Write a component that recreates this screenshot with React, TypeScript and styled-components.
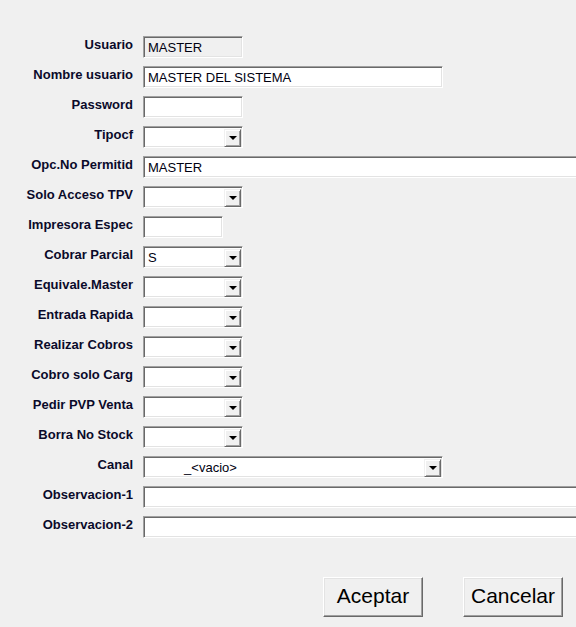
import React from "react";
import styled, { createGlobalStyle } from "styled-components";

const Global = createGlobalStyle`
  html, body { margin: 0; padding: 0; background: #f0f0f0; }
  body { width: 576px; height: 627px; overflow: hidden; font-family: "Liberation Sans", Arial, sans-serif; }
`;

const Page = styled.div`
  width: 576px;
  height: 627px;
  overflow: hidden;
  background: #f0f0f0;
  display: flex;
  flex-direction: column;
`;

const Form = styled.div`
  display: grid;
  grid-template-columns: 133px 1fr;
  column-gap: 10px;
  row-gap: 8px;
  padding-top: 36px;
`;

const Label = styled.div`
  font-weight: bold;
  font-size: 13px;
  color: #0a0a2a;
  text-align: right;
  line-height: 15px;
  padding-top: 1px;
  white-space: nowrap;
`;

const Cell = styled.div`
  height: 22px;
  display: flex;
  min-width: 0;
`;

const Field = styled.div<{ $w: number; $grey?: boolean }>`
  box-sizing: border-box;
  flex: none;
  width: ${(p) => p.$w}px;
  height: 22px;
  border: 1px solid;
  border-color: #a0a0a0 #ffffff #ffffff #a0a0a0;
  box-shadow: inset 1px 1px #696969, inset -1px -1px #e3e3e3;
  background: ${(p) => (p.$grey ? "#f0f0f0" : "#ffffff")};
  display: flex;
  align-items: center;
  font-size: 13px;
  color: #000010;
  padding: 1px 2px 0 4px;
  white-space: pre;
  overflow: hidden;
`;

const ComboText = styled.div`
  flex: 1;
  font-size: 13px;
  white-space: pre;
  overflow: hidden;
`;

const ArrowButton = styled.div`
  box-sizing: border-box;
  flex: none;
  width: 17px;
  height: 18px;
  margin-right: -1px;
  background: #f0f0f0;
  border: 1px solid;
  border-color: #f0f0f0 #696969 #696969 #f0f0f0;
  box-shadow: inset 1px 1px #ffffff, inset -1px -1px #a0a0a0;
  display: flex;
  align-items: center;
  justify-content: center;
`;

const Arrow = styled.div`
  width: 0;
  height: 0;
  border-left: 4px solid transparent;
  border-right: 4px solid transparent;
  border-top: 4px solid #000;
  margin-top: 1px;
`;

const Buttons = styled.div`
  display: flex;
  justify-content: flex-end;
  gap: 40px;
  padding-right: 13px;
  margin-top: 39px;
`;

const Button = styled.button`
  box-sizing: border-box;
  width: 100px;
  height: 40px;
  background: #f0f0f0;
  font-family: "Liberation Sans", Arial, sans-serif;
  font-size: 21px;
  color: #000;
  border: 1px solid;
  border-color: #ffffff #696969 #696969 #ffffff;
  box-shadow: inset -1px -1px #a0a0a0, inset 1px 1px #e3e3e3;
  padding: 0 0 2px 0;
`;

type Row =
  | { label: string; kind: "text"; w: number; value?: string; grey?: boolean }
  | { label: string; kind: "combo"; w: number; value?: string };

const rows: Row[] = [
  { label: "Usuario", kind: "text", w: 100, value: "MASTER", grey: true },
  { label: "Nombre usuario", kind: "text", w: 300, value: "MASTER DEL SISTEMA" },
  { label: "Password", kind: "text", w: 100 },
  { label: "Tipocf", kind: "combo", w: 100 },
  { label: "Opc.No Permitid", kind: "text", w: 460, value: "MASTER" },
  { label: "Solo Acceso TPV", kind: "combo", w: 100 },
  { label: "Impresora Espec", kind: "text", w: 80 },
  { label: "Cobrar Parcial", kind: "combo", w: 100, value: "S" },
  { label: "Equivale.Master", kind: "combo", w: 100 },
  { label: "Entrada Rapida", kind: "combo", w: 100 },
  { label: "Realizar Cobros", kind: "combo", w: 100 },
  { label: "Cobro solo Carg", kind: "combo", w: 100 },
  { label: "Pedir PVP Venta", kind: "combo", w: 100 },
  { label: "Borra No Stock", kind: "combo", w: 100 },
  { label: "Canal", kind: "combo", w: 300, value: "          _<vacio>" },
  { label: "Observacion-1", kind: "text", w: 460 },
  { label: "Observacion-2", kind: "text", w: 460 },
];

export default function App() {
  return (
    <Page>
      <Global />
      <Form>
        {rows.map((r) => (
          <React.Fragment key={r.label}>
            <Label>{r.label}</Label>
            <Cell>
              {r.kind === "text" ? (
                <Field $w={r.w} $grey={r.grey}>
                  {r.value ?? ""}
                </Field>
              ) : (
                <Field $w={r.w}>
                  <ComboText>{r.value ?? ""}</ComboText>
                  <ArrowButton>
                    <Arrow />
                  </ArrowButton>
                </Field>
              )}
            </Cell>
          </React.Fragment>
        ))}
      </Form>
      <Buttons>
        <Button>Aceptar</Button>
        <Button>Cancelar</Button>
      </Buttons>
    </Page>
  );
}
